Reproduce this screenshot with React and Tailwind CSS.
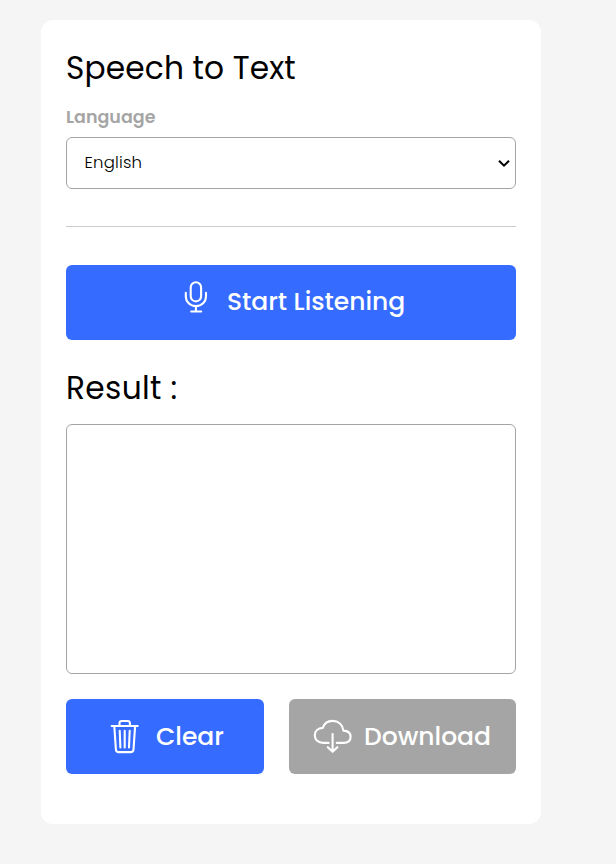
import React from "react";

function MicIcon() {
  return (
    <svg width="24" height="33" viewBox="0 0 24 33" fill="none" stroke="currentColor" strokeWidth="2.1" strokeLinecap="round">
      <rect x="6.700" y="1.200" width="10.400" height="19.200" rx="5.200" />
      <path d="M1.800 11.800v3.400c0 5.600 4.300 9.800 10.100 9.800s10.100-4.200 10.100-9.800v-3.400M11.900 25v5.300M7.200 30.500h10" />
    </svg>
  );
}

function TrashIcon() {
  return (
    <svg width="30" height="35" viewBox="0 0 30 35" fill="none" stroke="currentColor" strokeWidth="2.1" strokeLinecap="round" strokeLinejoin="round">
      <path d="M1.700 7h26M9.500 6.800V4.300c0-1.500.8-2.300 2.300-2.300h5.800c1.500 0 2.300.8 2.300 2.300v2.500M4.300 7.300l1.600 23.300c.2 1.700 1.100 2.500 2.700 2.500h12.200c1.600 0 2.500-.8 2.700-2.500L25.100 7.300M9.700 11.800l.7 16.700M14.700 11.800v16.700M19.700 11.800l-.7 16.700" />
    </svg>
  );
}

function CloudIcon() {
  return (
    <svg width="40" height="35" viewBox="0 0 40 35" fill="none" stroke="currentColor" strokeWidth="2.1" strokeLinecap="round" strokeLinejoin="round">
      <path d="M15.600 23.900h-5.300C5.100 23.900 1.800 20.900 1.800 16.400c0-4.300 3.300-7.300 8-7.500C11.200 4.400 14.800 1.900 19.600 1.900c5.700 0 10 3.600 10.800 9.700 4.300.2 7.200 2.500 7.200 6.100 0 4-2.900 6.200-7.200 6.200h-6.600M19.600 15v17.500M14.800 28.200l4.800 4.600 4.800-4.600" />
    </svg>
  );
}

export default function App() {
  return (
    <div className="h-[864px] w-[616px] bg-[#f5f5f5] pt-5 pl-[41px] font-['Poppins','Inter',sans-serif]">
      <main className="flex h-[804px] w-[500px] flex-col rounded-xl bg-white px-[25px] pt-6">
        <h1 className="h-12 text-[31.25px] leading-12 tracking-[0.14px] whitespace-nowrap text-black">Speech to Text</h1>
        <label htmlFor="language" className="mt-3 h-[26px] text-[17.5px] leading-[26px] font-semibold text-[#a5a5a5]">
          Language
        </label>
        <div className="relative mt-[7px] h-[52px]">
          <select id="language" className="h-full w-full appearance-none rounded-md border border-[#a5a5a5] bg-white pl-[17.5px] text-[16.5px] font-light tracking-[0.2px] text-black">
            <option>English</option>
          </select>
          <svg className="pointer-events-none absolute top-[22px] right-1.5" width="12" height="9" viewBox="0 0 12 9" fill="none" stroke="#000" strokeWidth="2">
            <path d="M1 1.700l5 5 5-5" />
          </svg>
        </div>
        <hr className="mt-[37px] h-px border-0 bg-[#cccccc]" />
        <button className="mt-[38px] flex h-[75px] items-center rounded-md bg-[#356bff] pl-[118px] text-white">
          <span className="-mt-2.5"><MicIcon /></span>
          <span className="-mt-0.5 ml-[19px] text-[25px] font-medium tracking-[-0.03px] whitespace-nowrap">Start Listening</span>
        </button>
        <h2 className="mt-6 h-12 text-[31.25px] leading-12 tracking-[0.35px] text-black">Result :</h2>
        <div className="mt-3 h-[250px] rounded-md border border-[#a5a5a5]" />
        <div className="mt-[25px] flex h-[75px] gap-[25px] text-[25px] font-medium text-white">
          <button className="flex w-[198px] items-center rounded-md bg-[#356bff] pl-11">
            <TrashIcon />
            <span className="ml-4">Clear</span>
          </button>
          <button className="flex w-[227px] items-center rounded-md bg-[#a5a5a5] pl-6">
            <CloudIcon />
            <span className="ml-[11px]">Download</span>
          </button>
        </div>
      </main>
    </div>
  );
}
